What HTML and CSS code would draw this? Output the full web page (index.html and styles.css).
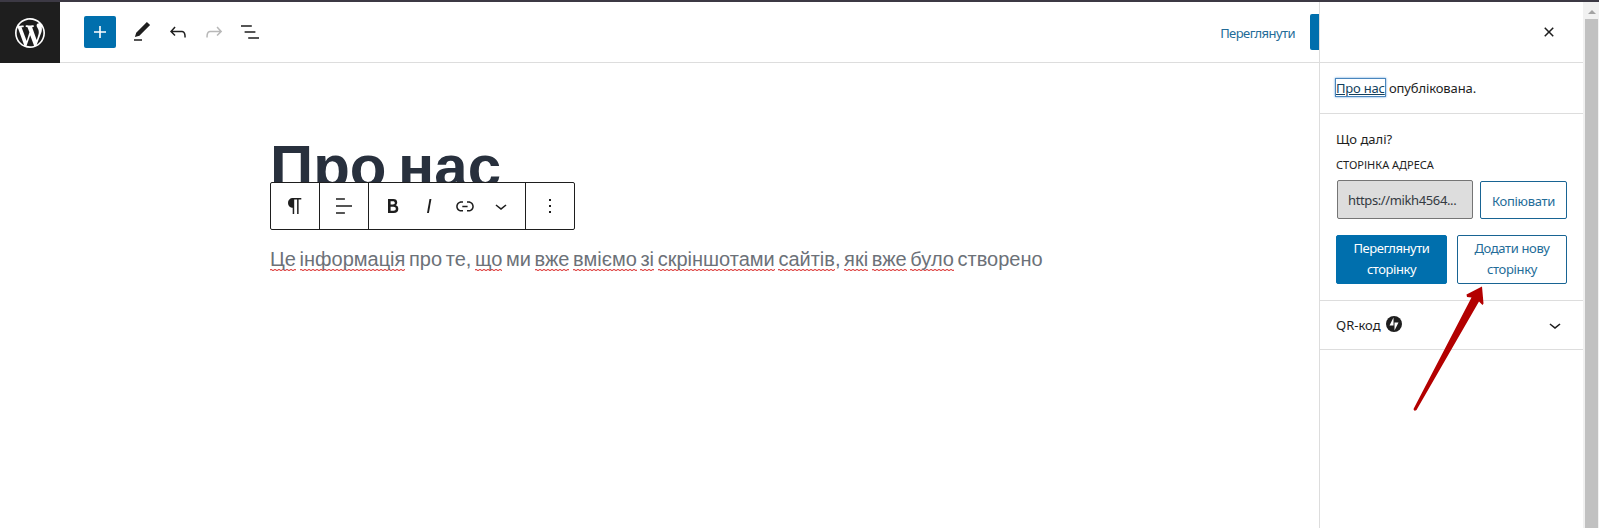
FILE: index.html
```html
<!DOCTYPE html>
<html lang="uk">
<head>
<meta charset="utf-8">
<title>Про нас</title>
<link rel="stylesheet" href="styles.css">
</head>
<body>
<div class="app">
  <div class="main">
    <header class="header">
      <div class="logo"><svg viewBox="-2 -2 24 24" width="36" height="36"><path d="M20 10c0-5.51-4.49-10-10-10C4.48 0 0 4.49 0 10c0 5.52 4.48 10 10 10 5.51 0 10-4.48 10-10zM7.78 15.37L4.37 6.22c.55-.02 1.17-.08 1.17-.08.5-.06.44-1.13-.06-1.11 0 0-1.45.11-2.37.11-.18 0-.37 0-.58-.01C4.12 2.69 6.87 1.11 10 1.11c2.33 0 4.45.87 6.05 2.34-.68-.11-1.65.39-1.65 1.58 0 .74.45 1.36.9 2.1.35.61.55 1.36.55 2.46 0 1.49-1.4 5-1.4 5l-3.03-8.37c.54-.02.82-.17.82-.17.5-.05.44-1.25-.06-1.22 0 0-1.44.12-2.38.12-.87 0-2.33-.12-2.33-.12-.5-.03-.56 1.2-.06 1.22l.92.08 1.26 3.41zM17.41 10c.24-.64.74-1.87.43-4.25.7 1.29 1.05 2.71 1.05 4.25 0 3.29-1.73 6.24-4.4 7.78.97-2.59 1.94-5.2 2.92-7.78zM6.1 18.09C3.12 16.65 1.11 13.53 1.11 10c0-1.3.23-2.48.72-3.59C3.25 10.3 4.67 14.2 6.1 18.09zm4.03-6.63l2.58 6.98c-.86.29-1.76.45-2.71.45-.79 0-1.57-.11-2.29-.33.81-2.38 1.62-4.74 2.42-7.1z"/></svg></div>
      <div class="tools">
        <span class="add"><svg viewBox="0 0 24 24"><path d="M18 11.2h-5.2V6h-1.6v5.2H6v1.6h5.2V18h1.6v-5.2H18z"/></svg></span>
        <span class="tool"><svg viewBox="0 0 24 24"><path d="M20.1 5.1L16.9 2 6.2 12.7l-1.3 4.4 4.5-1.3L20.1 5.1zM4 20.8h8v-1.5H4v1.5z"/></svg></span>
        <span class="tool"><svg viewBox="0 0 24 24"><path d="M18.3 11.7c-.6-.6-1.4-.9-2.3-.9H6.7l2.9-3.3-1.1-1-4.5 5L8.5 16l1-1-2.7-2.7H16c.5 0 .9.2 1.3.5 1 1 1 3.4 1 4.5v.3h1.5v-.2c0-1.5 0-4.3-1.5-5.7z"/></svg></span>
        <span class="tool tool-off"><svg viewBox="0 0 24 24"><path d="M15.6 6.5l-1.1 1 2.9 3.3H8c-.9 0-1.7.3-2.3.9-1.4 1.5-1.4 4.2-1.4 5.6v.2h1.5v-.3c0-1.1 0-3.5 1-4.5.3-.3.7-.5 1.3-.5h9.2L14.5 15l1.1 1.1 4.6-4.6-4.6-5z"/></svg></span>
        <span class="tool"><svg viewBox="0 0 24 24"><path d="M13.8 5.2H3v1.5h10.8V5.2zm-3.6 12v1.5H21v-1.5H10.2zm7.2-6H6.6v1.5h10.8v-1.5z"/></svg></span>
      </div>
      <a class="preview">Переглянути</a>
      <span class="publish"></span>
    </header>
    <div class="canvas">
      <h1 class="title">Про нас</h1>
      <div class="toolbar">
        <div class="group"><span class="cell"><svg viewBox="0 0 24 24"><path d="M18.3 4H9.9v-.1l-.9.2c-2.3.4-4 2.4-4 4.8s1.7 4.4 4 4.8l.7.1V20h1.5V5.5h2.9V20h1.5V5.5h2.7V4z"/></svg></span></div>
        <div class="group"><span class="cell"><svg viewBox="0 0 24 24"><path d="M4 19.8h8.9v-1.5H4v1.5zm8.9-15.6H4v1.5h8.9V4.2zm-8.9 7v1.5h16v-1.5H4z"/></svg></span></div>
        <div class="group group-wide">
          <span class="cell"><svg viewBox="0 0 24 24"><path d="M14.7 11.3c1-.6 1.5-1.6 1.5-3 0-2.3-1.3-3.4-4-3.4H7v14h5.8c1.4 0 2.5-.3 3.3-1 .8-.7 1.2-1.7 1.2-2.9.1-1.9-.8-3.1-2.6-3.7zm-5.1-4h2.3c.6 0 1.1.1 1.4.4.3.3.5.7.5 1.2s-.2 1-.5 1.2c-.3.3-.8.4-1.4.4H9.6V7.3zm4.6 9c-.4.3-1 .4-1.7.4H9.6v-3.9h2.9c.7 0 1.3.2 1.7.5.4.3.6.8.6 1.5s-.2 1.2-.6 1.5z"/></svg></span>
          <span class="cell"><svg viewBox="0 0 24 24"><path d="M12.5 5L10 19h1.9l2.5-14z"/></svg></span>
          <span class="cell"><svg viewBox="0 0 24 24"><path d="M15.6 7.2H14v1.5h1.6c2 0 3.7 1.7 3.7 3.7s-1.7 3.7-3.7 3.7H14v1.5h1.6c2.8 0 5.2-2.3 5.2-5.2 0-2.9-2.3-5.2-5.2-5.2zM4.7 12.4c0-2 1.7-3.7 3.7-3.7H10V7.2H8.4c-2.9 0-5.2 2.3-5.2 5.2 0 2.9 2.3 5.2 5.2 5.2H10v-1.5H8.4c-2 0-3.7-1.7-3.7-3.7zm4.6.9h5.3v-1.5H9.3v1.5z"/></svg></span>
          <span class="cell"><svg viewBox="0 0 24 24"><path d="M17.5 11.6L12 16l-5.5-4.4.9-1.2L12 14l4.5-3.6 1 1.2z"/></svg></span>
        </div>
        <div class="group"><span class="cell"><svg viewBox="0 0 24 24"><path d="M13 19h-2v-2h2v2zm0-6h-2v-2h2v2zm0-6h-2V5h2v2z"/></svg></span></div>
      </div>
      <p class="para"><u>Це</u> <u>інформація</u> про те, <u>що</u> ми <u>вже</u> <u>вміємо</u> <u>зі</u> <u>скріншотами</u> <u>сайтів</u>, <u>які</u> <u>вже</u> <u>було</u> створено</p>
    </div>
  </div>
  <aside class="panel">
    <div class="panel-head"><svg viewBox="0 0 24 24"><path d="M12 13.06l3.712 3.713 1.061-1.06L13.061 12l3.712-3.712-1.06-1.06L12 10.938 8.288 7.227l-1.061 1.06L10.939 12l-3.712 3.712 1.06 1.061L12 13.061z"/></svg></div>
    <div class="panel-status"><a class="page-link">Про нас</a><span class="status-text">опублікована.</span></div>
    <div class="panel-next">
      <div class="next-title">Що далі?</div>
      <div class="label">СТОРІНКА АДРЕСА</div>
      <div class="address">
        <div class="url">https://mikh4564...</div>
        <div class="btn copy">Копіювати</div>
      </div>
      <div class="actions">
        <div class="btn btn-primary">Переглянути<br>сторінку</div>
        <div class="btn">Додати нову<br>сторінку</div>
      </div>
    </div>
    <div class="panel-qr">
      <span class="qr-text">QR-код</span>
      <svg class="jetpack" viewBox="0 0 32 32"><circle cx="16" cy="16" r="16"/><path class="bolt" d="M15 19H7l8-16zM17 29V13h8z"/></svg>
      <svg class="chevron" viewBox="0 0 24 24"><path d="M17.5 11.6L12 16l-5.5-4.4.9-1.2L12 14l4.5-3.6 1 1.2z"/></svg>
    </div>
  </aside>
  <div class="scrollbar"><i class="scroll-up"></i><i class="thumb"></i></div>
  <svg class="arrow" viewBox="0 0 80 130"><path d="M72 2.500L56.500 10.500L57 13L61.500 13.500L3.500 125Q4 128 6.500 126L69 17.500L72.500 21L73.500 19.500Z"/></svg>
</div>
</body>
</html>
```
FILE: styles.css
```css
* { box-sizing: border-box; }
body { margin: 0; background: #fff; color: #1e1e1e; font: 13px/20px "Noto Sans", sans-serif; overflow: hidden; }
svg { display: block; width: 24px; height: 24px; fill: #1e1e1e; flex: none; }
.app { position: relative; display: flex; height: 528px; border-top: 2px solid #3c3944; }
.main { width: 1319px; }
.header { display: flex; align-items: center; height: 61px; border-bottom: 1px solid #ddd; }
.logo { display: grid; place-items: center; width: 60px; height: 61px; margin-bottom: -1px; background: #1e1e1e; }
.logo svg { width: 36px; height: 36px; fill: #fff; }
.tools { display: flex; align-items: center; margin-left: 24px; }
.add { display: grid; place-items: center; width: 32px; height: 32px; margin-right: 8px; background: #006fad; border-radius: 2px; }
.add svg { fill: #fff; }
.tool { display: grid; place-items: center; width: 36px; height: 36px; }
.tool-off svg { fill: #b8b8b8; }
.preview { margin-left: auto; padding-top: 1px; color: #236c98; letter-spacing: -0.55px; }
.publish { width: 9px; height: 36px; margin-left: 15px; background: #006fad; border-radius: 2px 0 0 2px; }
.canvas { padding: 70px 0 0 270px; }
.title { height: 49px; margin: 0; font: bold 60px/68px "Liberation Sans", sans-serif; color: #28303d; word-spacing: -5px; }
.toolbar { position: relative; display: flex; width: 305px; height: 48px; background: #fff; border: 1px solid #1e1e1e; border-radius: 2px; }
.group { display: flex; justify-content: center; align-items: center; width: 49px; border-right: 1px solid #1e1e1e; }
.group:last-child { width: 48px; border-right: 0; }
.group-wide { width: 157px; padding-right: 1px; }
.cell { display: grid; place-items: center; width: 36px; }
.para { margin: 17px 0 0; font: 20px/24px "Liberation Sans", sans-serif; color: #6c7178; white-space: nowrap; word-spacing: -1.92px; }
.para u {
  padding-bottom: 1px;
  text-decoration: none;
  background:
    repeating-linear-gradient(90deg, #e0504f 0 2px, #f6c9c9 2px 4px) 0 calc(100% - 1px) / 100% 1px no-repeat,
    repeating-linear-gradient(90deg, #f6c9c9 0 2px, #e0504f 2px 4px) 0 100% / 100% 1px no-repeat;
}
.panel { width: 264px; border-left: 1px solid #ddd; background: #fff; }
.panel-head { display: flex; align-items: center; justify-content: flex-end; height: 61px; padding-right: 22px; border-bottom: 1px solid #ddd; }
.panel-status { display: flex; align-items: center; height: 51px; padding: 0 0 1px 15px; border-bottom: 1px solid #ddd; }
.page-link { width: 51px; height: 19px; line-height: 18px; border: 1px solid #4a86bd; box-shadow: 0 0 2px #5b9dd9; color: #123f5c; text-decoration: underline; white-space: nowrap; letter-spacing: -0.2px; }
.status-text { margin-left: 3px; letter-spacing: -0.12px; }
.panel-next { height: 187px; padding: 15px 16px 0; border-bottom: 1px solid #ddd; }
.label { margin-top: 7px; font-size: 11px; line-height: 18px; }
.address { display: flex; justify-content: space-between; align-items: flex-end; margin-top: 6px; padding-left: 1px; }
.url { width: 136px; height: 39px; padding-left: 10px; line-height: 39px; color: #333a42; background: #ddd; border: 1px solid #757575; border-radius: 2px; letter-spacing: -0.38px; }
.btn { display: grid; place-items: center; width: 110px; height: 49px; padding-bottom: 2px; border: 1px solid #186493; border-radius: 2px; color: #236c98; line-height: 21px; text-align: center; letter-spacing: -0.35px; }
.copy { width: 87px; height: 38px; padding: 2px 0 0; letter-spacing: -0.3px; }
.actions { display: flex; justify-content: space-between; margin-top: 16px; }
.btn-primary { width: 111px; background: #006fad; border-color: #006fad; color: #fff; letter-spacing: -0.45px; }
.panel-qr { display: flex; align-items: center; height: 49px; padding: 0 16px; border-bottom: 1px solid #ddd; }
.jetpack { width: 16px; height: 16px; margin: 0 0 2px 5px; }
.bolt { fill: #fff; }
.chevron { margin-left: auto; }
.scrollbar { display: flex; flex-direction: column; width: 16px; padding: 8px 1px 0 2px; background: #f1f1f1; }
.scroll-up { align-self: center; border: 4px solid transparent; border-top: 0; border-bottom: 4px solid #a3a3a3; }
.thumb { flex: 1; margin-top: 5px; background: #c1c1c1; }
.arrow { position: absolute; left: 1410px; top: 282px; width: 80px; height: 130px; fill: #b30000; }
```
